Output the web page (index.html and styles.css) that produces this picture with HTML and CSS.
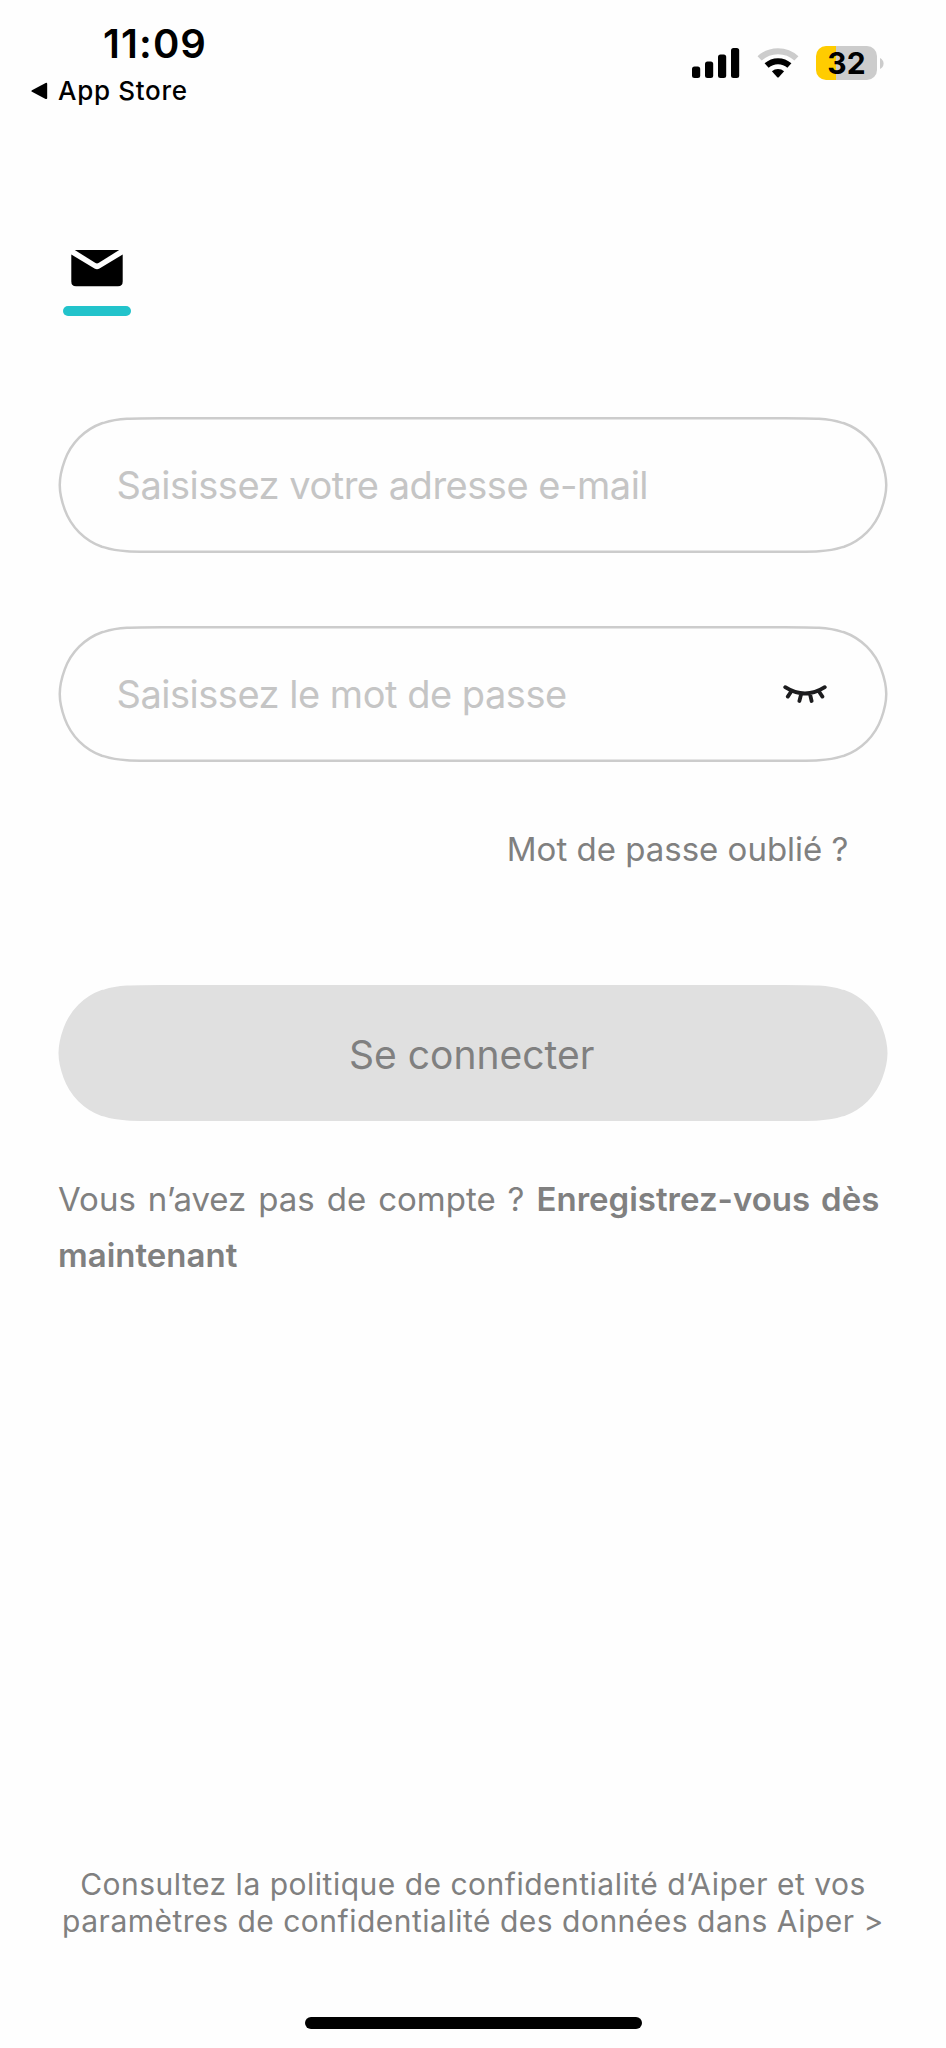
FILE: index.html
```html
<!DOCTYPE html>
<html lang="fr">
<head>
<meta charset="utf-8">
<title>Connexion</title>
<link rel="stylesheet" href="styles.css">
</head>
<body>
<svg class="defs" width="0" height="0">
	<symbol id="pill" viewBox="0 0 829 136">
		<path d="M103.3 1.25H725.7C755.1 1.25 769.8 1.25 783 5.6L785.6 6.25C802.9 12.5 816.5 26.1 822.75 43.4C825.65 51.3 827.75 58.6 827.75 68C827.75 77.4 825.65 84.7 822.75 92.6C816.5 109.9 802.9 123.5 785.6 129.75L783 130.4C769.8 134.75 755.1 134.75 725.7 134.75H103.3C73.9 134.75 59.2 134.75 46 130.4L43.4 129.75C26.1 123.5 12.5 109.9 6.25 92.6C3.35 84.7 1.25 77.4 1.25 68C1.25 58.6 3.35 51.3 6.25 43.4C12.5 26.1 26.1 12.5 43.4 6.25L46 5.6C59.2 1.25 73.9 1.25 103.3 1.25Z"/>
	</symbol>
</svg>
<div id="app">

	<header class="status">
		<div class="status-left">
			<div class="clock">11:09</div>
			<div class="back">
				<svg width="17" height="18" viewBox="0 0 17 18"><path d="M1 8.2L14.6 1Q16.2 .3 16.2 2V16Q16.2 17.6 14.6 16.9L1 9.8Q-.3 9 1 8.2Z"/></svg>
				<span>App Store</span>
			</div>
		</div>
		<div class="status-right">
			<svg width="48" height="32" viewBox="0 0 48 32">
				<rect x="0" y="19.5" width="8.2" height="11.5" rx="2.5"/>
				<rect x="13" y="14.5" width="8.2" height="16.5" rx="2.5"/>
				<rect x="26" y="7.5" width="8.2" height="23.5" rx="2.5"/>
				<rect x="39" y="1" width="8.2" height="30" rx="2.5"/>
			</svg>
			<svg class="wifi" width="42" height="32" viewBox="0 0 42 32">
				<path d="M2.6 11.4A27 27 0 0 1 39.4 11.4" fill="none" stroke="#ccc" stroke-width="6"/>
				<path d="M9.6 18.6A17 17 0 0 1 32.4 18.6" fill="none" stroke="#000" stroke-width="6"/>
				<path d="M14.9 24.2A9.2 9.2 0 0 1 27.1 24.2L22 29.9Q21 31 20 29.9Z"/>
			</svg>
			<div class="battery"><span>32</span></div>
			<svg class="nub" width="4" height="11" viewBox="0 0 4 11"><path d="M0 0Q3.6 2 3.6 5.5T0 11Z" fill="#ccc"/></svg>
		</div>
	</header>

	<main>
		<div class="tab">
			<svg width="52" height="37" viewBox="0 0 52 37">
				<path d="M3.8 0H48.2L27.5 13.1Q26 14 24.5 13.1L3.8 0Z"/>
				<path d="M.3 4.5L23.5 18.6Q26 20 28.5 18.6L51.7 4.5V31.5Q51.7 36.2 47 36.2H5Q.3 36.2 .3 31.5Z"/>
			</svg>
			<i></i>
		</div>

		<form>
			<div class="field">
				<svg class="outline"><use href="#pill"/></svg>
				<span>Saisissez votre adresse e-mail</span>
			</div>
			<div class="field">
				<svg class="outline"><use href="#pill"/></svg>
				<span>Saisissez le mot de passe</span>
				<svg class="eye" width="44" height="20" viewBox="0 0 44 20">
					<path d="M2.2 3.2Q22 15.8 41.8 3.2M8.2 7.5L4.8 12.6M18.2 10L16.4 17M27 10L28.6 17M36 7.5L39.4 12.6"/>
				</svg>
			</div>
			<a class="forgot">Mot de passe oublié ?</a>
			<div class="field btn">
				<svg class="outline"><use href="#pill"/></svg>
				<span>Se connecter</span>
			</div>
		</form>

		<p class="register">Vous n’avez pas de compte ? <b>Enregistrez-vous dès<br>maintenant</b></p>
	</main>

	<footer>
		<p>Consultez la politique de confidentialité d’Aiper et vos<br>paramètres de confidentialité des données dans Aiper &gt;</p>
		<div class="home-bar"></div>
	</footer>

</div>
</body>
</html>
```
FILE: styles.css
```css
body {
	margin: 0;
	background: #fefefe;
}
.defs {
	position: absolute;
}
#app {
	display: flex;
	flex-direction: column;
	height: 2048px;
	overflow: hidden;
	font-family: Inter, "Noto Sans", sans-serif;
	color: #808080;
}
svg {
	display: block;
}

/* status bar */
.status {
	display: flex;
	justify-content: space-between;
	align-items: flex-start;
	box-sizing: border-box;
	height: 230px;
	padding: 20px 62px 0 31px;
	color: #000;
}
.clock {
	padding-left: 72px;
	font-size: 40px;
	font-weight: 600;
	line-height: 48px;
	letter-spacing: 1.1px;
}
.back {
	display: flex;
	align-items: center;
	gap: 10px;
	margin-top: 7px;
	font-size: 26px;
	font-weight: 500;
	line-height: 32px;
	letter-spacing: .7px;
}
.status-right {
	display: flex;
	align-items: center;
	padding-top: 26px;
}
.wifi {
	margin: 0 17px;
}
.battery {
	width: 61px;
	height: 34px;
	border-radius: 10px;
	background: linear-gradient(90deg, #ffcc00 20px, #ccc 20px);
	font-size: 30px;
	font-weight: 700;
	line-height: 34px;
	text-align: center;
}
.nub {
	margin-left: 3px;
}

main {
	flex: 1;
	padding: 20px 58px 0;
}
.tab {
	display: flex;
	flex-direction: column;
	align-items: center;
	width: 68px;
	margin-left: 5px;
}
.tab i {
	width: 68px;
	height: 10px;
	margin-top: 18.5px;
	border-radius: 5px;
	background: #22c3cb;
}

form {
	display: flex;
	flex-direction: column;
	margin-top: 101.5px;
}
.field {
	display: flex;
	justify-content: space-between;
	align-items: center;
	position: relative;
	height: 136px;
	margin-bottom: 73px;
	padding: 0 61px 0 58.5px;
	font-size: 38px;
	letter-spacing: -.48px;
	color: #c5c5c5;
}
.outline {
	position: absolute;
	left: 0;
	top: 0;
	z-index: -1;
	width: 830px;
	height: 136px;
	fill: none;
	stroke: #ccc;
	stroke-width: 2.5px;
}
.eye {
	fill: none;
	stroke: #1c1c1e;
	stroke-width: 3.8px;
	stroke-linecap: round;
}
.forgot {
	align-self: flex-end;
	margin: -6px 39.5px 0 0;
	font-size: 33px;
	line-height: 40px;
}
.btn {
	justify-content: center;
	margin: 116px 0 0;
	font-size: 39px;
	letter-spacing: 0;
	color: #808080;
}
.btn span {
	padding-top: 3px;
}
.btn .outline {
	fill: #e0e0e0;
	stroke: #e0e0e0;
}

.register {
	margin: 50px 0 0;
	font-size: 33px;
	line-height: 56px;
	word-spacing: 2.7px;
	white-space: nowrap;
}
.register b {
	font-weight: 600;
}

footer {
	display: flex;
	flex-direction: column;
	align-items: center;
	padding-bottom: 19px;
}
footer p {
	margin: 0;
	font-size: 30px;
	line-height: 37px;
	letter-spacing: .5px;
	text-align: center;
	white-space: nowrap;
}
.home-bar {
	width: 337px;
	height: 12.5px;
	margin-top: 77px;
	border-radius: 7px;
	background: #000;
}
```
